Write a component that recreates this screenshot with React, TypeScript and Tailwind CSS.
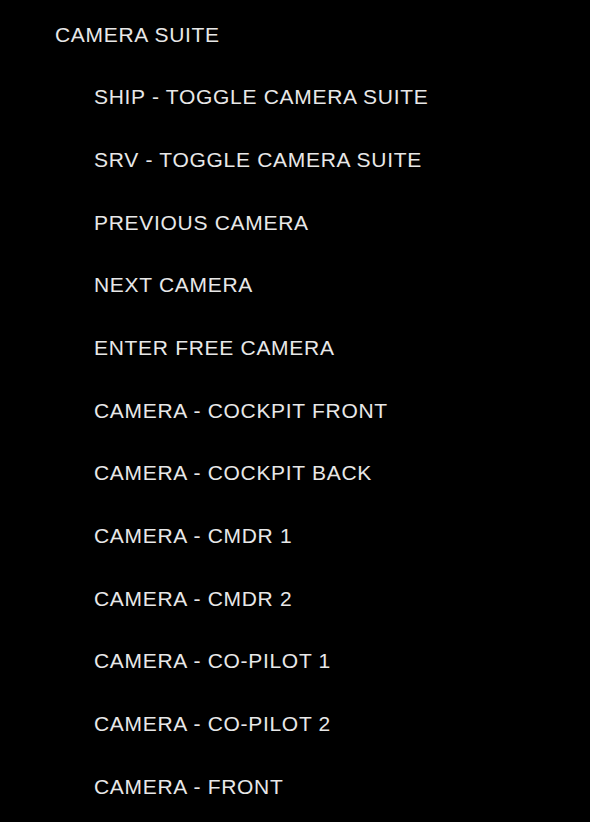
const items = [
  'SHIP - TOGGLE CAMERA SUITE',
  'SRV - TOGGLE CAMERA SUITE',
  'PREVIOUS CAMERA',
  'NEXT CAMERA',
  'ENTER FREE CAMERA',
  'CAMERA - COCKPIT FRONT',
  'CAMERA - COCKPIT BACK',
  'CAMERA - CMDR 1',
  'CAMERA - CMDR 2',
  'CAMERA - CO-PILOT 1',
  'CAMERA - CO-PILOT 2',
  'CAMERA - FRONT',
]

export default function App() {
  return (
    <div className="w-[590px] h-[822px] bg-black overflow-hidden pt-[3px] font-['Liberation_Sans',Arial,sans-serif] text-[21px] tracking-[0.7px] text-[#e8e8e8]">
      <div className="h-[62.7px] flex items-center pl-[55px]">CAMERA SUITE</div>
      {items.map((label) => (
        <div key={label} className="h-[62.7px] flex items-center pl-[94px]">
          {label}
        </div>
      ))}
    </div>
  )
}
